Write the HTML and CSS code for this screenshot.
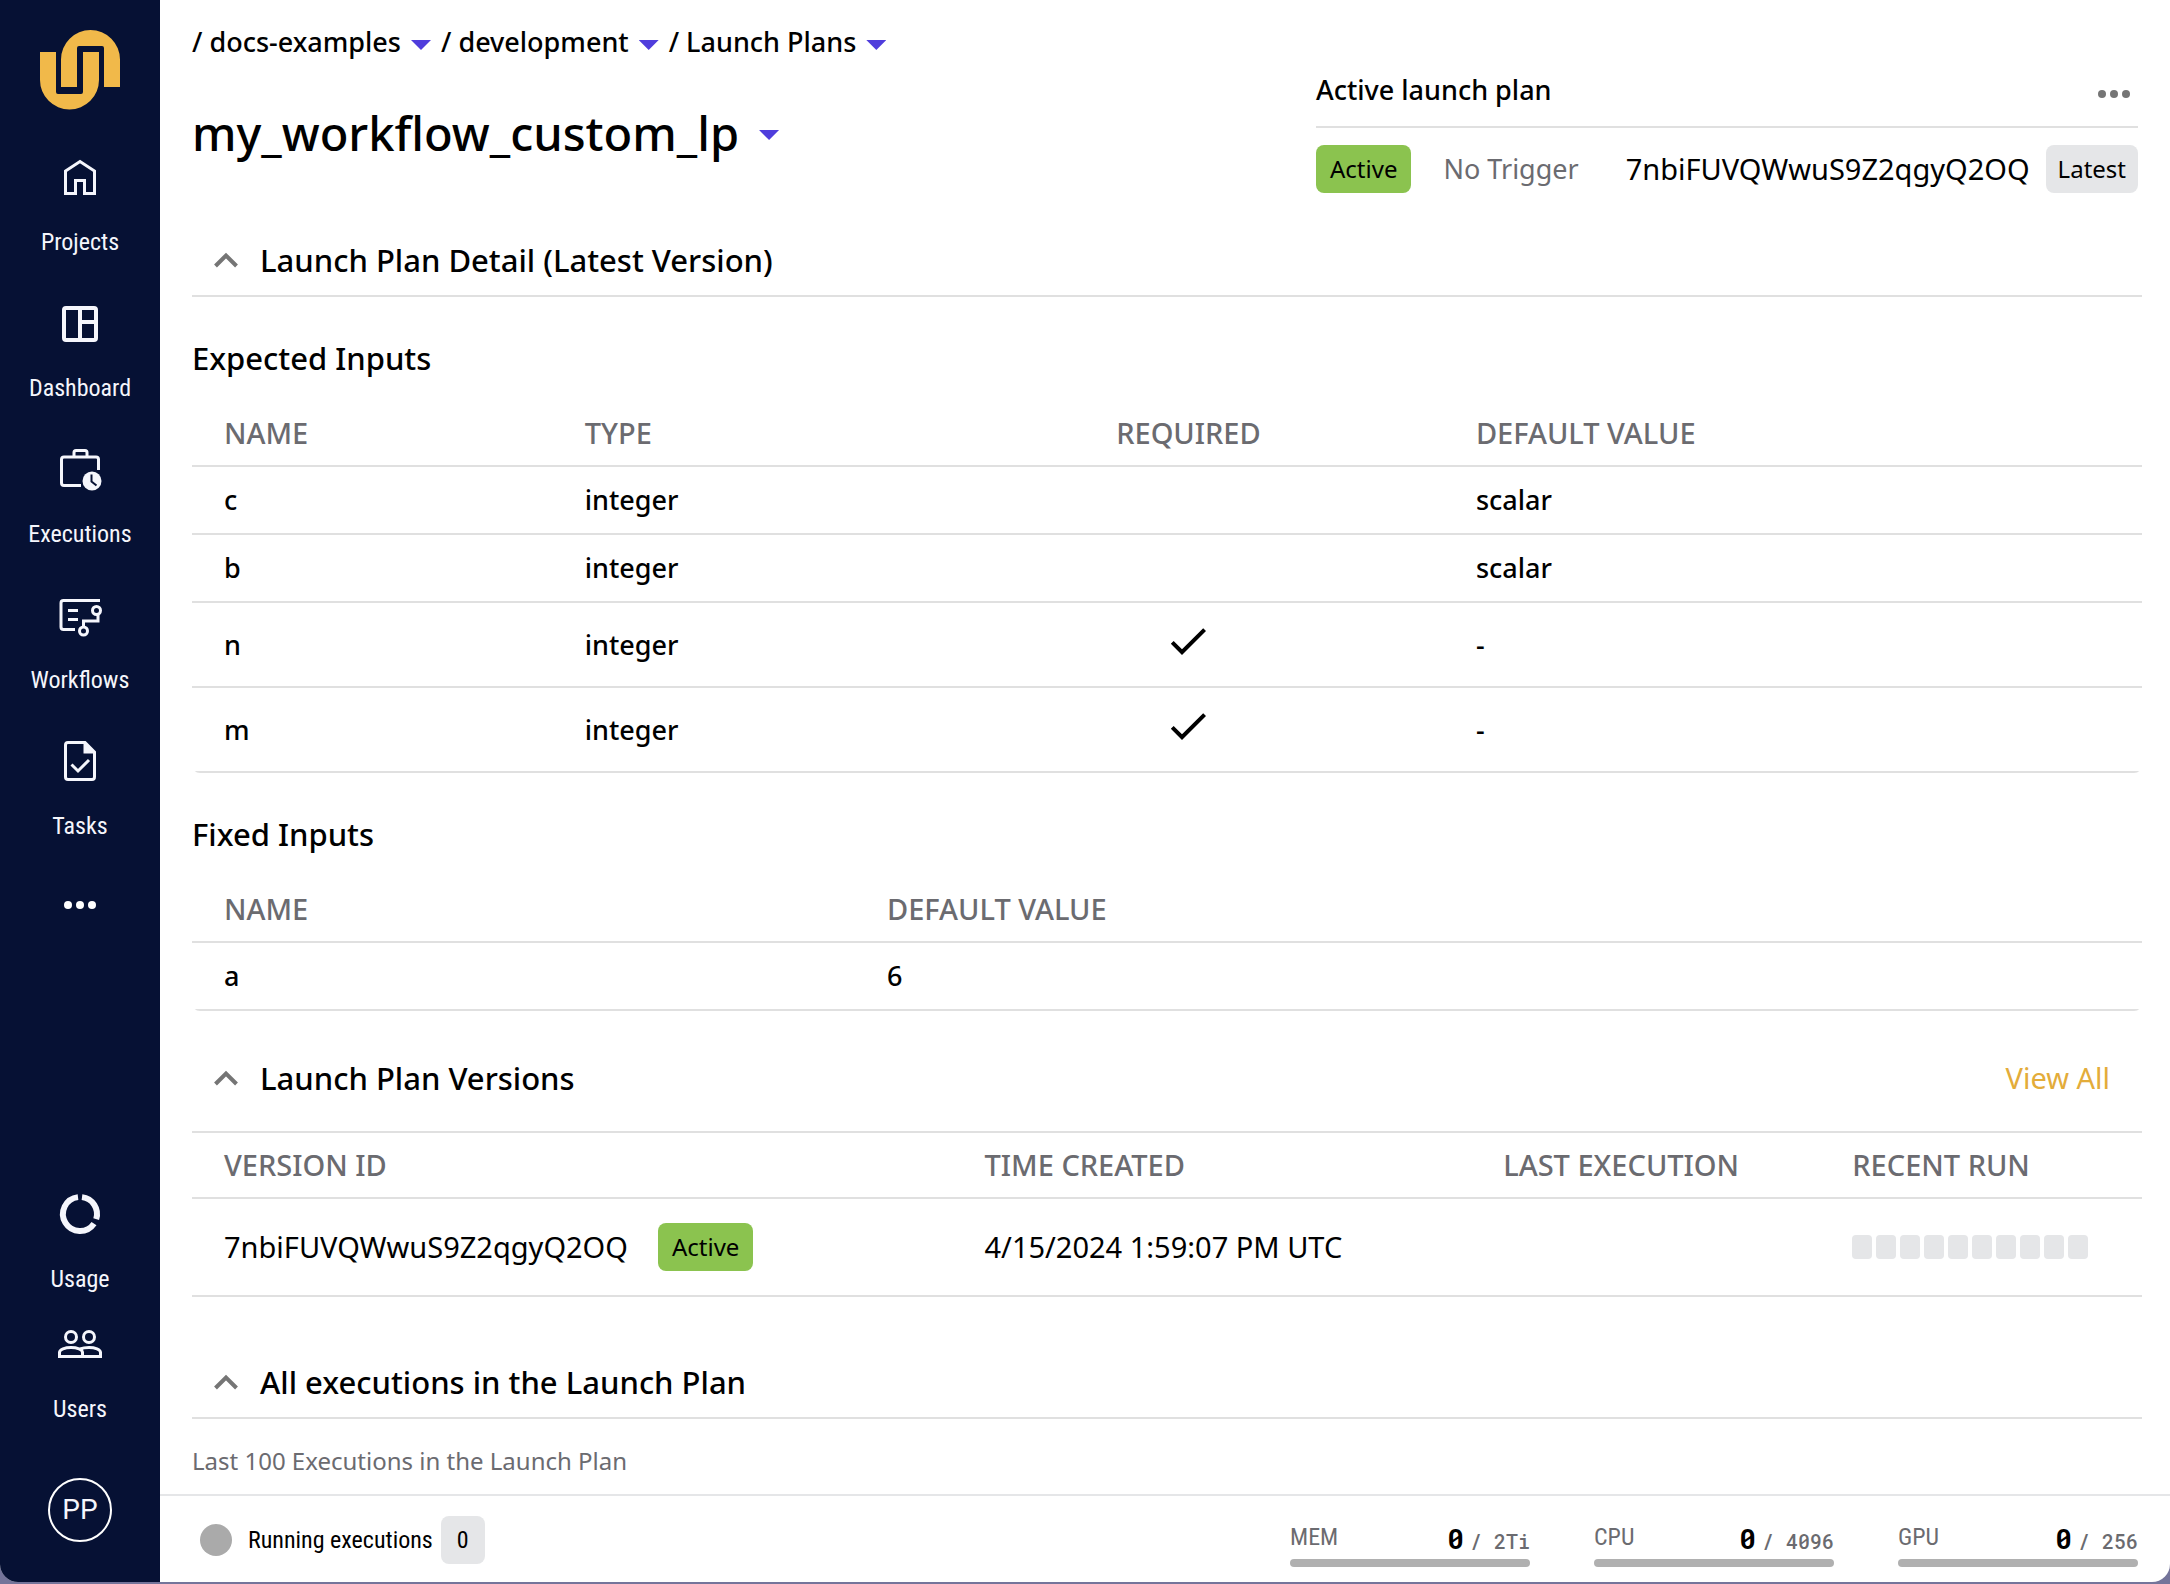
FILE: index.html
```html
<!DOCTYPE html>
<html lang="en">
<head>
<meta charset="utf-8">
<title>my_workflow_custom_lp</title>
<link rel="stylesheet" href="styles.css">
</head>
<body>
<div class="app">
  <nav class="sidebar" aria-label="Main">
    <a class="logo" href="#" aria-label="Home">
      <svg width="80" height="80" viewBox="40 30 80 80" fill="#f1b94a"><path d="M40 52H56V92q0 2 2 2H81q2 0 2-2V52H99V80A29.500 29.500 0 0 1 40 80Z"/><path d="M61 87V59.500A29.500 29.500 0 0 1 120 59.500V87H104V48q0-2-2-2H79q-2 0-2 2V87Z"/></svg>
    </a>
    <div class="nav-list">
      <a class="nav-item" href="#">
        <svg class="nav-icon" viewBox="0 0 48 48" fill="none" stroke="#f5f6fc" stroke-width="3"><path d="M9.500 39.500V17L24 7.500L38.500 17V39.500H28.500V26.500H19.500V39.500Z"/></svg>
        <span>Projects</span>
      </a>
      <a class="nav-item" href="#">
        <svg class="nav-icon" viewBox="0 0 48 48" fill="none" stroke="#f5f6fc" stroke-width="4"><rect x="8" y="8" width="32" height="32" rx="2"/><path d="M24 8V40M24 22H40"/></svg>
        <span>Dashboard</span>
      </a>
      <a class="nav-item" href="#">
        <svg class="nav-icon" viewBox="0 0 48 48" fill="none" stroke="#f5f6fc" stroke-width="3"><path d="M25 39.500H8q-2.500 0-2.500-2.500V13.500q0-2.500 2.500-2.500H40q2.500 0 2.500 2.500V24M18 11V6.500q0-2 2-2H29q2 0 2 2V11"/><circle cx="36" cy="35" r="9.500" fill="#f5f6fc" stroke="none"/><path d="M35.500 28.500V35.500L40.500 39.500" stroke="#061134" stroke-width="2"/></svg>
        <span>Executions</span>
      </a>
      <a class="nav-item" href="#">
        <svg class="nav-icon" viewBox="0 0 48 48" fill="none" stroke="#f5f6fc" stroke-width="3"><path d="M44 8.500H7.500q-2.500 0-2.500 2.500V35q0 2.500 2.500 2.500H19M12 18.500H22M12 27.500H22M27.500 34V29H42V23"/><circle cx="40.500" cy="18.500" r="4"/><circle cx="27.500" cy="39" r="4"/></svg>
        <span>Workflows</span>
      </a>
      <a class="nav-item" href="#">
        <svg class="nav-icon" viewBox="0 0 48 48" fill="none" stroke="#f5f6fc" stroke-width="3"><path d="M29 4.500H12q-2.500 0-2.500 2.500V39q0 2.500 2.500 2.500H36q2.500 0 2.500-2.500V14Z"/><path d="M27.500 4V15.500H39Z" fill="#f5f6fc" stroke="none"/><path d="M15.500 26.500L22 33L33 22"/></svg>
        <span>Tasks</span>
      </a>
      <button class="more-nav" type="button" aria-label="More">
        <svg width="32" height="8" viewBox="0 0 32 8" fill="#fff"><circle cx="4" cy="4" r="4"/><circle cx="16" cy="4" r="4"/><circle cx="28" cy="4" r="4"/></svg>
      </button>
    </div>
    <div class="nav-bottom">
      <a class="nav-item" href="#">
        <svg class="nav-icon" viewBox="0 1 48 48" fill="none" stroke="#f5f6fc" stroke-width="6"><path d="M26 7.120A17 17 0 0 1 40.200 29.200M38 33.600A17 17 0 1 1 22 7.120"/></svg>
        <span>Usage</span>
      </a>
      <a class="nav-item" href="#">
        <svg class="nav-icon" viewBox="0 1 48 48" fill="none" stroke="#f5f6fc" stroke-width="3"><circle cx="15" cy="17" r="5.500"/><circle cx="33" cy="17" r="5.500"/><path d="M3.500 36.500V32.500C3.500 29.500 9 27.500 15 27.500S26.500 29.500 26.500 32.500V36.500ZM24 29C26.500 28 29.500 27.500 33 27.500C39 27.500 44.500 29.500 44.500 32.500V36.500H26.500"/></svg>
        <span>Users</span>
      </a>
      <button class="avatar" type="button">PP</button>
    </div>
  </nav>

  <div class="page">
    <main class="content">
      <header class="header">
        <div class="header-main">
          <nav class="crumbs" aria-label="Breadcrumb">
            <a href="#">/ docs-examples</a><button class="caret" type="button" aria-label="Switch project"></button>
            <a href="#">/ development</a><button class="caret" type="button" aria-label="Switch domain"></button>
            <a href="#">/ Launch Plans</a><button class="caret" type="button" aria-label="Switch section"></button>
          </nav>
          <div class="title-row">
            <h1>my_workflow_custom_lp</h1><button class="caret" type="button" aria-label="Switch launch plan"></button>
          </div>
        </div>
        <section class="active-plan">
          <div class="active-head">
            <h2>Active launch plan</h2>
            <button class="more" type="button" aria-label="Options">
              <svg width="32" height="8" viewBox="0 0 32 8" fill="#757575"><circle cx="4" cy="4" r="4"/><circle cx="16" cy="4" r="4"/><circle cx="28" cy="4" r="4"/></svg>
            </button>
          </div>
          <div class="active-row">
            <span class="pill pill-green">Active</span>
            <span class="trigger">No Trigger</span>
            <span class="version">7nbiFUVQWwuS9Z2qgyQ2OQ</span>
            <span class="pill pill-grey">Latest</span>
          </div>
        </section>
      </header>

      <section>
        <div class="section-head">
          <button class="toggle" type="button" aria-expanded="true">
            <svg width="24" height="16" viewBox="0 0 24 16" fill="none" stroke="#757575" stroke-width="4"><path d="M1.500 14L12 3.500L22.500 14"/></svg>
            Launch Plan Detail (Latest Version)
          </button>
        </div>
        <h3>Expected Inputs</h3>
        <div class="table-wrap">
          <table class="expected">
            <thead><tr><th class="w-name">NAME</th><th class="w-type">TYPE</th><th class="w-required">REQUIRED</th><th>DEFAULT VALUE</th></tr></thead>
            <tbody>
              <tr><td>c</td><td>integer</td><td></td><td>scalar</td></tr>
              <tr><td>b</td><td>integer</td><td></td><td>scalar</td></tr>
              <tr class="tall"><td>n</td><td>integer</td><td><svg class="check" viewBox="0 0 24 24" role="img" aria-label="Required"><path d="M9 16.170L4.830 12l-1.420 1.410L9 19 21 7l-1.410-1.410z"/></svg></td><td>-</td></tr>
              <tr class="tall"><td>m</td><td>integer</td><td><svg class="check" viewBox="0 0 24 24" role="img" aria-label="Required"><path d="M9 16.170L4.830 12l-1.420 1.410L9 19 21 7l-1.410-1.410z"/></svg></td><td>-</td></tr>
            </tbody>
          </table>
        </div>
        <h3>Fixed Inputs</h3>
        <div class="table-wrap">
          <table class="fixed">
            <thead><tr><th class="w-name">NAME</th><th>DEFAULT VALUE</th></tr></thead>
            <tbody><tr><td>a</td><td>6</td></tr></tbody>
          </table>
        </div>
      </section>

      <section>
        <div class="section-head section-head-tall">
          <button class="toggle" type="button" aria-expanded="true">
            <svg width="24" height="16" viewBox="0 0 24 16" fill="none" stroke="#757575" stroke-width="4"><path d="M1.500 14L12 3.500L22.500 14"/></svg>
            Launch Plan Versions
          </button>
          <a class="view-all" href="#">View All</a>
        </div>
        <table class="versions">
          <thead><tr><th class="w-id">VERSION ID</th><th class="w-created">TIME CREATED</th><th class="w-last">LAST EXECUTION</th><th>RECENT RUN</th></tr></thead>
          <tbody>
            <tr>
              <td><div class="id-cell">7nbiFUVQWwuS9Z2qgyQ2OQ<span class="pill pill-green">Active</span></div></td>
              <td>4/15/2024 1:59:07 PM UTC</td>
              <td></td>
              <td><div class="runs"><i></i><i></i><i></i><i></i><i></i><i></i><i></i><i></i><i></i><i></i></div></td>
            </tr>
          </tbody>
        </table>
      </section>

      <section class="executions">
        <div class="section-head">
          <button class="toggle" type="button" aria-expanded="true">
            <svg width="24" height="16" viewBox="0 0 24 16" fill="none" stroke="#757575" stroke-width="4"><path d="M1.500 14L12 3.500L22.500 14"/></svg>
            All executions in the Launch Plan
          </button>
        </div>
        <p class="note">Last 100 Executions in the Launch Plan</p>
      </section>
    </main>

    <footer class="status">
      <div class="running"><span class="dot"></span><span>Running executions</span><span class="count">0</span></div>
      <div class="meters">
        <div class="meter"><div class="meter-text"><span>MEM</span><span class="usage"><b>0</b>/ 2Ti</span></div><div class="bar"></div></div>
        <div class="meter"><div class="meter-text"><span>CPU</span><span class="usage"><b>0</b>/ 4096</span></div><div class="bar"></div></div>
        <div class="meter"><div class="meter-text"><span>GPU</span><span class="usage"><b>0</b>/ 256</span></div><div class="bar"></div></div>
      </div>
    </footer>
  </div>
</div>
</body>
</html>
```
FILE: styles.css
```css
* { box-sizing: border-box; }

body {
  margin: 0;
  padding-bottom: 2px;
  background: #74749a;
  color: #000;
  font: 500 27px/36px "Noto Sans", sans-serif;
}

h1, h2, h3, p { margin: 0; font-weight: 500; }
a { color: inherit; text-decoration: none; }
button {
  padding: 0;
  border: 0;
  background: none;
  color: inherit;
  font: inherit;
  cursor: pointer;
}
svg { display: block; }

.app {
  display: flex;
  min-height: calc(100vh - 2px);
  overflow: hidden;
  border-radius: 0 0 18px 18px;
  background: #fff;
}

/* Sidebar */
.sidebar {
  display: flex;
  flex: none;
  flex-direction: column;
  align-items: center;
  width: 160px;
  padding: 30px 0 40px;
  background: #061134;
  color: #f5f6fc;
  font: 400 24px/28px "Roboto Condensed", "Liberation Sans Narrow", Roboto, sans-serif;
}
.nav-list {
  display: flex;
  flex-direction: column;
  align-items: center;
  gap: 44px;
  margin-top: 44px;
}
.nav-item {
  display: flex;
  flex-direction: column;
  align-items: center;
  gap: 26px;
}
.nav-icon { width: 48px; height: 48px; }
.more-nav { padding: 17px 0; }
.nav-bottom {
  display: flex;
  flex-direction: column;
  align-items: center;
  gap: 28px;
  margin-top: auto;
}
.avatar {
  width: 64px;
  height: 64px;
  margin-top: 27px;
  border: 2px solid #fff;
  border-radius: 50%;
  font: 400 28px/32px Roboto, sans-serif;
}

/* Main column */
.page {
  display: flex;
  flex: 1;
  flex-direction: column;
  min-width: 0;
}
.content { flex: 1; padding: 0 28px 0 32px; }

.header {
  display: flex;
  justify-content: space-between;
  height: 225px;
}
.header-main { padding-top: 24px; }
.crumbs { display: flex; align-items: center; height: 36px; }
.crumbs .caret { margin: 6px 10px 0; }
.caret {
  width: 20px;
  height: 10px;
  background: #4f3ddc;
  clip-path: polygon(0 0, 100% 0, 50% 100%);
}
.title-row { display: flex; align-items: center; gap: 20px; margin-top: 41px; }
.title-row .caret { margin-top: 4px; }
h1 { font-size: 47px; line-height: 64px; }

.active-plan { width: 822px; margin-right: 4px; padding-top: 54px; }
.active-head {
  display: flex;
  align-items: center;
  justify-content: space-between;
  height: 74px;
  border-bottom: 2px solid #e0e0e0;
}
h2 { font-size: 27px; line-height: 36px; }
.more { margin: 8px 8px 0 0; }
.active-row { display: flex; align-items: center; margin-top: 17px; font-weight: 400; }
.trigger { margin-left: 32px; color: #6b6b70; }
.version { margin: 0 16px 0 auto; font-size: 29px; }

.pill {
  padding: 6px 14px;
  border-radius: 8px;
  font-size: 24px;
  font-weight: 400;
  line-height: 36px;
}
.pill-green { background: #8bc34f; }
.pill-grey { padding: 6px 12px; background: #e5e6e8; }

.section-head {
  display: flex;
  align-items: center;
  justify-content: space-between;
  height: 72px;
  border-bottom: 2px solid #e0e0e0;
}
.section-head-tall { height: 108px; margin-top: 14px; padding-right: 32px; }
.toggle {
  display: flex;
  align-items: center;
  gap: 22px;
  padding-left: 22px;
  font-size: 31px;
  line-height: 40px;
}
.view-all { color: #e3ac3a; font-size: 29px; font-weight: 400; }

h3 { margin: 41px 0 23px; font-size: 31px; line-height: 40px; }

.table-wrap { overflow: hidden; border-radius: 0 0 8px 8px; }
table {
  width: 100%;
  border-spacing: 0;
  table-layout: fixed;
}
th, td {
  height: 68px;
  padding: 0 0 0 32px;
  border-bottom: 2px solid #e0e0e0;
  text-align: left;
}
th { height: 66px; color: #6b6b70; font-size: 29px; font-weight: 500; }
.tall td { height: 85px; }
.expected .w-name { width: 18.5%; }
.expected .w-type { width: 19.5%; }
.expected .w-required { width: 26.2%; }
.expected th:nth-child(3) { padding: 0; text-align: center; }
.expected td:nth-child(3) { padding: 0 0 8px; }
.check { width: 48px; height: 48px; margin: 0 auto; }
.fixed .w-name { width: 34%; }
.versions .w-id { width: 39%; }
.versions .w-created { width: 26.6%; }
.versions .w-last { width: 17.9%; }
.versions td { height: 98px; font-size: 29px; font-weight: 400; }
.id-cell { display: flex; align-items: center; gap: 30px; }
.runs { display: flex; gap: 4px; }
.runs i { width: 20px; height: 24px; border-radius: 4px; background: #e5e6e8; }

.executions { margin-top: 50px; }
.note {
  padding: 26px 0 16px;
  color: #6b6b70;
  font-size: 24px;
  font-weight: 400;
  line-height: 32px;
}

/* Status bar */
.status {
  display: flex;
  align-items: center;
  justify-content: space-between;
  height: 88px;
  padding: 2px 32px 0 40px;
  border-top: 2px solid #e5e6e8;
  font: 400 24px/28px "Roboto Condensed", "Liberation Sans Narrow", Roboto, sans-serif;
}
.running { display: flex; align-items: center; }
.dot { width: 32px; height: 32px; margin-right: 16px; border-radius: 50%; background: #aaa; }
.count {
  width: 44px;
  margin-left: 8px;
  border-radius: 8px;
  background: #e5e6e8;
  line-height: 48px;
  text-align: center;
}
.meters { display: flex; align-self: flex-end; gap: 64px; margin-bottom: 15px; }
.meter { width: 240px; }
.meter-text {
  display: flex;
  align-items: flex-start;
  justify-content: space-between;
  height: 32px;
  color: #6b6b70;
}
.usage { font: 500 20px/32px "Roboto Mono", "DejaVu Sans Mono", monospace; }
.usage b { margin-right: 6px; color: #000; font-size: 28px; }
.bar { height: 8px; margin-top: 4px; border-radius: 4px; background: #b0b0b0; }
```
